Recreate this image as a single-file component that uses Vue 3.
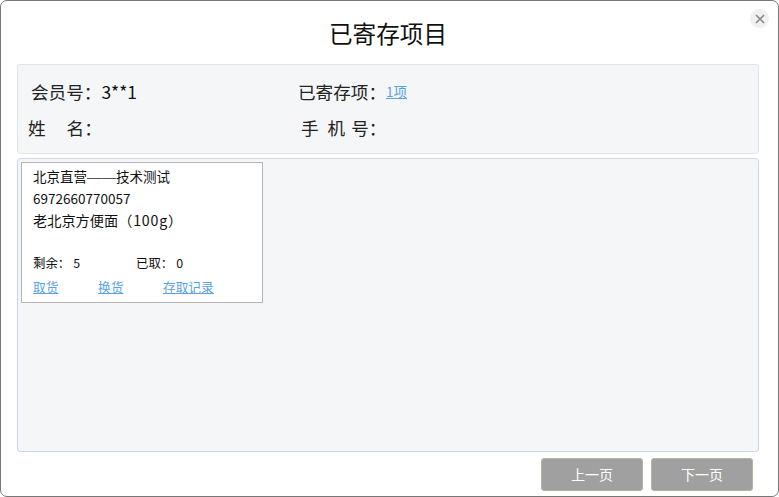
<script setup>
</script>

<template>
  <div class="dialog">
    <button class="close" aria-label="关闭">
      <svg width="10" height="10" viewBox="0 0 10 10"><path d="M1 1L9 9M9 1L1 9" stroke="#8a8a8a" stroke-width="1.6" fill="none" /></svg>
    </button>
    <h1 class="title">已寄存项目</h1>
    <section class="info">
      <div class="info-row">
        <div class="cell first"><span class="label">会员号：</span><span class="value">3**1</span></div>
        <div class="cell"><span class="label">已寄存项：</span><a class="link count">1项</a></div>
      </div>
      <div class="info-row">
        <div class="cell first name"><span class="label">姓</span><span class="label gap-name">名：</span></div>
        <div class="cell phone"><span class="label">手</span><span class="label gap-a">机</span><span class="label gap-b">号：</span></div>
      </div>
    </section>
    <section class="list">
      <article class="card">
        <div class="line">北京直营<span class="dash">——</span>技术测试</div>
        <div class="line">6972660770057</div>
        <div class="line big">老北京方便面<span class="spec">（100g）</span></div>
        <div class="stats">
          <span class="stat">剩余：<i>5</i></span>
          <span class="stat">已取：<i>0</i></span>
        </div>
        <div class="actions">
          <a class="link a1">取货</a>
          <a class="link a2">换货</a>
          <a class="link">存取记录</a>
        </div>
      </article>
    </section>
    <footer class="foot">
      <button class="page">上一页</button>
      <button class="page">下一页</button>
    </footer>
  </div>
</template>

<style>
html, body { margin: 0; background: #fff; }
</style>

<style scoped>
.dialog {
  position: relative;
  box-sizing: border-box;
  width: 779px;
  height: 497px;
  border: 1px solid #777;
  border-radius: 7px;
  background: #fff;
  padding: 0 19px 0 16px;
  font-family: "Noto Sans CJK SC", "Noto Sans", sans-serif;
  color: #111;
  display: flex;
  flex-direction: column;
  overflow: hidden;
}
.close {
  position: absolute;
  top: 8px;
  right: 9px;
  width: 19px;
  height: 19px;
  border: 0;
  padding: 0;
  border-radius: 50%;
  background: #f0f0f0;
  display: flex;
  align-items: center;
  justify-content: center;
}
.title {
  margin: 0;
  height: 63px;
  line-height: 65px;
  text-align: center;
  font-size: 23.6px;
  font-weight: 400;
  color: #111;
}
.info {
  box-sizing: border-box;
  height: 90px;
  background: #f5f6f8;
  border: 1px solid #dfe4f0;
  border-radius: 3px;
  padding: 8px 0 0 13px;
}
.info-row {
  display: flex;
  height: 36px;
  align-items: center;
  font-size: 17.6px;
}
.cell { width: 267px; display: flex; align-items: center; white-space: nowrap; }
.first { padding-left: 0; }
.name { margin-left: -3px; margin-right: 3px; }
.phone { padding-left: 3px; }
.gap-name { margin-left: 21px; }
.gap-a { margin-left: 9px; }
.gap-b { margin-left: 6px; }
.label { color: #222; }
.value { font-size: 17.4px; color: #111; }
.link { color: #5aa2e8; text-decoration: underline; font-size: 12.7px; }
.count { font-size: 13.5px; margin-left: 0; }
.list {
  box-sizing: border-box;
  margin-top: 4px;
  height: 294px;
  background: #f5f6f8;
  border: 1px solid #ccd5e8;
  border-radius: 3px;
  padding: 3px;
}
.card {
  box-sizing: border-box;
  width: 242px;
  height: 141px;
  background: #fff;
  border: 1px solid #b4b4b8;
  padding: 2px 0 0 11px;
}
.line {
  font-size: 13.5px;
  line-height: 22px;
  height: 22px;
  color: #111;
  white-space: nowrap;
}
.dash { font-family: "Liberation Sans", sans-serif; font-size: 14.5px; color: #555; }
.big { font-size: 14.2px; }
.spec { letter-spacing: 0.8px; }
.stats {
  display: flex;
  margin-top: 21px;
  font-size: 12.4px;
  line-height: 22px;
  height: 22px;
  color: #111;
}
.stat { width: 103px; }
.stat i { font-style: normal; margin-left: 3px; }
.actions {
  display: flex;
  margin-top: 2px;
  line-height: 22px;
}
.a1, .a2 { width: 65px; }
.foot {
  display: flex;
  justify-content: flex-end;
  gap: 8px;
  margin-top: 6px;
  padding-right: 6px;
}
.page {
  box-sizing: border-box;
  width: 102px;
  height: 33px;
  background: #a0a0a0;
  border: 1px solid #b3b59f;
  border-radius: 3px;
  color: #fff;
  font: 14px "Noto Sans CJK SC", sans-serif;
  padding-bottom: 3px;
}
</style>
